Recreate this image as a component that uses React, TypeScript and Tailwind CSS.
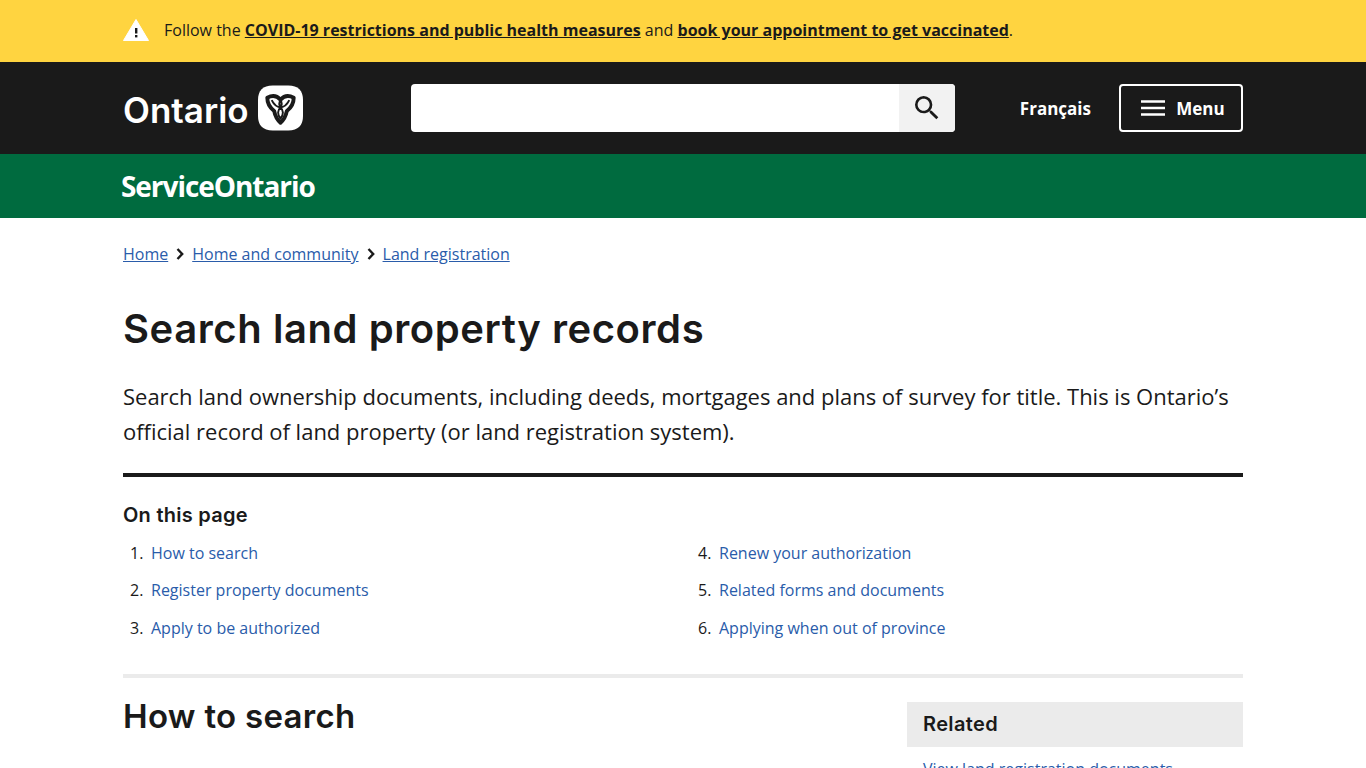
import React from "react";

const Trillium = () => (
  <svg viewBox="0 0 46 46" className="w-[45px] h-[46px] shrink-0">
    <path d="M15 0H31C41 0 46 5 46 15V31C46 41 41 46 31 46H15C5 46 0 41 0 31V15C0 5 5 0 15 0Z" fill="#fff" />
    <path
      d="M23 14.500C19 10 14 10 9.500 12.500C9.500 18 12 22.500 16.500 26C17.500 31 20 35.500 23 38C26 35.500 28.500 31 29.500 26C34 22.500 36.500 18 36.500 12.500C32 10 27 10 23 14.500Z"
      fill="none"
      stroke="#1a1a1a"
      strokeWidth="4"
      strokeLinejoin="round"
    />
    <path
      d="M23 14.500C21.500 17 21.500 20 23 22.500C24.500 20 24.500 17 23 14.500ZM14 15C16 19 19 22 23 22.500C27 22 30 19 32 15M23 22.500C20 25 19.500 30 23 34C26.500 30 26 25 23 22.500Z"
      fill="none"
      stroke="#1a1a1a"
      strokeWidth="2"
      strokeLinejoin="round"
    />
  </svg>
);

const Chevron = () => (
  <svg viewBox="0 0 8 12" className="w-2 h-3 mx-2 shrink-0">
    <path d="M1.500 1L6.200 6L1.500 11" fill="none" stroke="#1a1a1a" strokeWidth="2.400" />
  </svg>
);

const Link = ({ children }: { children: React.ReactNode }) => (
  <a href="#" className="text-[#2a5caa] no-underline">
    {children}
  </a>
);

const tocLeft = ["How to search", "Register property documents", "Apply to be authorized"];
const tocRight = ["Renew your authorization", "Related forms and documents", "Applying when out of province"];

const App = () => {
  return (
    <div className="h-screen overflow-hidden bg-white text-[#1a1a1a] font-['Open_Sans',sans-serif]">
      <div className="h-[62px] bg-[#ffd440] flex items-center">
        <div className="w-[1120px] mx-auto flex items-center pb-0.5">
          <svg viewBox="0 0 26 24" className="w-[26px] h-6 mr-[15px] shrink-0">
            <path d="M13 1.500L25.500 22.500H0.500Z" fill="#fff" stroke="#fff" strokeLinejoin="round" />
            <rect x="12" y="10" width="2.400" height="5.500" fill="#1a1a1a" />
            <rect x="12" y="17" width="2.400" height="2.400" fill="#1a1a1a" />
          </svg>
          <p className="text-base leading-6">
            Follow the{" "}
            <a href="#" className="font-bold underline">COVID-19 restrictions and public health measures</a> and{" "}
            <a href="#" className="font-bold underline">book your appointment to get vaccinated</a>.
          </p>
        </div>
      </div>

      <div className="h-[92px] bg-[#1a1a1a] flex items-center">
        <div className="w-[1120px] mx-auto flex items-center">
          <div className="w-[288px] flex items-center">
            <span className="w-[135px] text-white text-[35px] leading-none font-semibold font-['Inter',sans-serif] mt-1">Ontario</span>
            <Trillium />
          </div>
          <div className="w-[544px] h-12 bg-white rounded flex justify-end overflow-hidden">
            <div className="w-14 h-12 bg-[#f2f2f2] flex items-center justify-center">
              <svg viewBox="0 0 24 24" className="w-8 h-8">
                <path
                  d="M15.500 14h-.79l-.28-.27A6.470 6.470 0 0 0 16 9.500 6.500 6.500 0 1 0 9.500 16c1.610 0 3.090-.59 4.230-1.570l.27.28v.79l5 4.990L20.490 19l-4.990-5zm-6 0C7.010 14 5 11.990 5 9.500S7.010 5 9.500 5 14 7.010 14 9.500 11.990 14 9.500 14z"
                  fill="#1a1a1a"
                />
              </svg>
            </div>
          </div>
          <span className="ml-auto mr-7 mt-0.5 text-white font-bold text-[17px]">Français</span>
          <div className="w-[124px] h-12 border-2 border-white rounded flex items-center justify-center gap-[11px] pl-1">
            <svg viewBox="0 0 24 16" className="w-6 h-4">
              <path d="M0 1.500H24M0 8H24M0 14.500H24" stroke="#fff" strokeWidth="2.400" />
            </svg>
            <span className="mt-0.5 text-white font-bold text-[17px]">Menu</span>
          </div>
        </div>
      </div>

      <div className="h-16 bg-[#006b3f] flex items-center">
        <div className="w-[1120px] mx-auto">
          <span className="block -ml-0.5 text-white text-[28px] leading-none font-bold tracking-[-1.05px]">ServiceOntario</span>
        </div>
      </div>

      <main className="w-[1120px] mx-auto">
        <nav className="flex items-center pt-6 text-base leading-6">
          <a href="#" className="text-[#2a5caa] underline">Home</a>
          <Chevron />
          <a href="#" className="text-[#2a5caa] underline">Home and community</a>
          <Chevron />
          <a href="#" className="text-[#2a5caa] underline">Land registration</a>
        </nav>

        <h1 className="mt-[35px] text-[40px] leading-[56px] font-semibold tracking-[0.57px] font-['Inter',sans-serif]">
          Search land property records
        </h1>
        <p className="mt-[22px] text-[22px] leading-[35px] tracking-[-0.01px]">
          Search land ownership documents, including deeds, mortgages and plans of survey for title. This is Ontario’s official record of land property (or land registration system).
        </p>

        <div className="mt-6 h-1 bg-[#1a1a1a]" />

        <h2 className="mt-6 text-[20px] leading-7 font-semibold tracking-[0.25px] font-['Inter',sans-serif]">On this page</h2>
        <div className="mt-[5px] grid grid-cols-2 gap-x-4">
          <ol>
            {tocLeft.map((t, i) => (
              <li key={t} className="h-[37.5px] flex items-center text-base">
                <span className="w-7 pl-[7px] shrink-0">{i + 1}.</span>
                <Link>{t}</Link>
              </li>
            ))}
          </ol>
          <ol>
            {tocRight.map((t, i) => (
              <li key={t} className="h-[37.5px] flex items-center text-base">
                <span className="w-7 pl-[7px] shrink-0">{i + 4}.</span>
                <Link>{t}</Link>
              </li>
            ))}
          </ol>
        </div>

        <div className="mt-[27px] h-1 bg-[#ebebeb]" />

        <div className="flex justify-between">
          <h2 className="mt-[14px] text-[33px] leading-[48px] font-semibold tracking-[0.3px] font-['Inter',sans-serif]">How to search</h2>
          <aside className="w-[336px] mt-6">
            <div className="h-[45px] bg-[#ebebeb] flex items-center px-4">
              <span className="text-[20px] font-semibold tracking-[0.35px] font-['Inter',sans-serif]">Related</span>
            </div>
            <div className="mt-[10px] px-4 text-base">
              <a href="#" className="text-[#2a5caa] underline">View land registration documents</a>
            </div>
          </aside>
        </div>
      </main>
    </div>
  );
};

export default App;
